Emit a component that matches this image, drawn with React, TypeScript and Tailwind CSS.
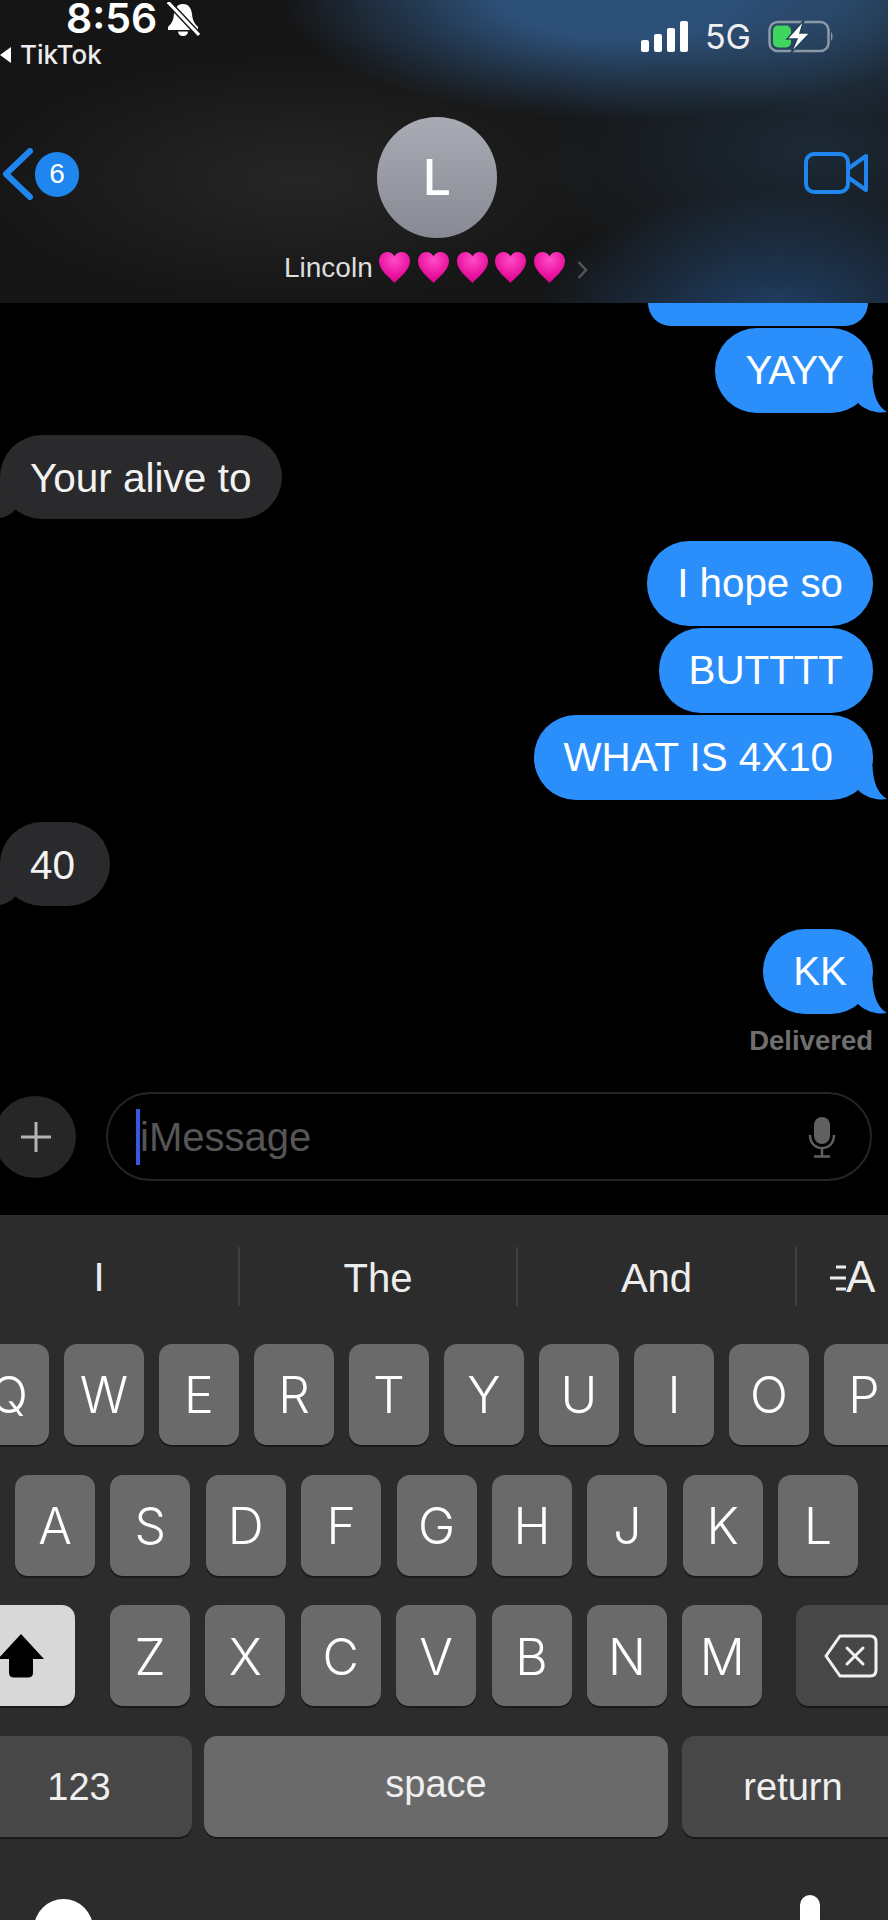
import React from "react";

const LS = "font-['Liberation_Sans',sans-serif]";

function Heart() {
  return (
    <svg width="31" height="31" viewBox="0 0 31 31" className="shrink-0">
      <defs>
        <radialGradient id="hg" cx="0.5" cy="0.25" r="0.8">
          <stop offset="0" stopColor="#ff4cc6" />
          <stop offset="0.6" stopColor="#ea16a2" />
          <stop offset="1" stopColor="#d1008a" />
        </radialGradient>
      </defs>
      <path d="M15.5 31C10 25 0 18 0 9C0 3.5 4 0 8.5 0C11.5 0 14 1.5 15.5 4.5C17 1.5 19.5 0 22.5 0C27 0 31 3.5 31 9C31 18 21 25 15.5 31Z" fill="url(#hg)" />
    </svg>
  );
}

function Tail() {
  return (
    <svg width="32" height="34" viewBox="0 0 32 34" className="absolute right-[-15px] bottom-0">
      <path d="M2 24L8 0H16.5C17 16 22 28 31 33C24 34.5 11 33 2 24Z" fill="#2b8ffb" />
    </svg>
  );
}

function LeftTail() {
  return (
    <svg width="18" height="40" viewBox="0 0 18 40" className="absolute left-0 bottom-0">
      <path d="M0 0H2L16 30C11 35 6 38 0 39Z" fill="#2a2a2c" />
    </svg>
  );
}

function Sent({ text, tail, className }: { text: string; tail?: boolean; className: string }) {
  return (
    <div className={`relative self-end mr-[15px] flex h-[85px] items-center rounded-[42px] bg-[#2b8ffb] pt-[2px] text-[40.3px] text-white ${className}`}>
      {text}
      {tail && <Tail />}
    </div>
  );
}

function Received({ text, className }: { text: string; className: string }) {
  return (
    <div className={`relative self-start flex h-[84px] items-center rounded-[42px] bg-[#2a2a2c] pl-[30px] pt-[2px] text-[40.5px] text-[#f2f2f2] ${className}`}>
      {text}
      <LeftTail />
    </div>
  );
}

function Key({ label, low }: { label: string; low?: boolean }) {
  return (
    <div className={`flex h-[101px] w-[80px] shrink-0 items-center justify-center rounded-[13px] bg-[#6a6a6a] font-['Inter',sans-serif] text-[50px] font-light text-white shadow-[0_2px_0_#191919] ${low ? "pt-[4px]" : "pt-[2px]"}`}>
      {label}
    </div>
  );
}

export default function App() {
  return (
    <div className={`${LS} flex h-[1920px] w-[888px] flex-col overflow-hidden bg-black`}>
      {/* header */}
      <header className="h-[303px] shrink-0 bg-[#151515] bg-[radial-gradient(ellipse_340px_125px_at_620px_-5px,#2d5078_0%,#2d5078_35%,#2d507800_100%),radial-gradient(ellipse_200px_120px_at_830px_0px,#27435f,#27435f00),radial-gradient(ellipse_240px_130px_at_775px_320px,#21426a_0%,#21426500_100%),radial-gradient(ellipse_280px_150px_at_810px_150px,#1c2936,#1c293600),radial-gradient(ellipse_330px_130px_at_300px_180px,#262626,#26262600)]">
        <div className="flex h-[117px] justify-between">
          <div className="flex flex-col font-['Inter',sans-serif] text-white">
            <div className="ml-[66px] flex items-start gap-[10px]">
              <span className="text-[41px] font-semibold leading-[36px]">8:56</span>
              <svg width="33" height="34" viewBox="0 0 33 34" className="mt-[2px]">
                <path d="M16 2C10 2 7.5 7 7 12C6.5 18 5 21 1 25V28H31V25C27 21 25.5 18 25 12C24.5 7 22 2 16 2Z" fill="#fff" />
                <path d="M11 29.5H21C21 32 19 34 16 34C13 34 11 32 11 29.5Z" fill="#fff" />
                <path d="M1 0L32 33" stroke="#151515" strokeWidth="6" />
                <path d="M1 0L32 33" stroke="#fff" strokeWidth="3" />
              </svg>
            </div>
            <div className="mt-[4px] flex items-center gap-[9px]">
              <svg width="11" height="16" viewBox="0 0 11 16"><path d="M11 0V16L0 8Z" fill="#fff" /></svg>
              <span className="text-[26px] font-medium leading-[30px] text-[#ececec]">TikTok</span>
            </div>
          </div>
          <div className="mr-[54px] mt-[21px] flex h-[31px] items-end">
            <div className="flex items-end gap-[5px]">
              <span className="h-[12px] w-[8px] rounded-[2px] bg-white" />
              <span className="h-[18px] w-[8px] rounded-[2px] bg-white" />
              <span className="h-[24px] w-[8px] rounded-[2px] bg-white" />
              <span className="h-[31px] w-[8px] rounded-[2px] bg-white" />
            </div>
            <span className="ml-[17px] mb-[-3px] font-['Inter',sans-serif] text-[34px] leading-[36px] text-[#f0f0f0]">5G</span>
            <svg width="66" height="33" viewBox="0 0 66 33" className="ml-[17px] mb-[-1px]">
              <rect x="1.5" y="2" width="59" height="29" rx="8" fill="none" stroke="#8d9aa6" strokeWidth="2.5" />
              <path d="M63 12C65 13 65 20 63 21Z" fill="#8d9aa6" />
              <rect x="5" y="5.5" width="18" height="22" rx="5" fill="#3ed65c" />
              <path d="M36 0L19 19H29L23 33L42 13H32Z" fill="#fff" stroke="#24405c" strokeWidth="1.5" />
            </svg>
          </div>
        </div>
        <div className="flex items-start">
          <div className="flex w-[283px] items-center pl-[2px] pt-[31px]">
            <svg width="31" height="52" viewBox="0 0 31 52">
              <path d="M28 3L4 26L28 49" fill="none" stroke="#1f86ef" strokeWidth="6" strokeLinecap="round" strokeLinejoin="round" />
            </svg>
            <div className="ml-[2px] flex h-[45px] w-[44px] items-center justify-center rounded-full bg-[#1f86ef] text-[28px] text-white">6</div>
          </div>
          <div className="flex w-[308px] flex-col items-center">
            <div className="flex h-[121px] w-[120px] items-center justify-center rounded-full bg-linear-to-b from-[#a9abb5] to-[#888a93] font-['Inter',sans-serif] text-[50px] font-medium text-white">L</div>
            <div className="mt-[14px] flex h-[31px] w-full items-center text-[28px] text-[#dedede]">
              <span className="w-[96px] shrink-0 pl-[1px]">Lincoln</span>
              <div className="flex gap-[7.8px]">
                <Heart />
                <Heart />
                <Heart />
                <Heart />
                <Heart />
              </div>
              <svg width="11" height="18" viewBox="0 0 11 18" className="ml-[12px] mt-[4px]">
                <path d="M1.5 1L9 9L1.5 17" fill="none" stroke="#555" strokeWidth="2.5" />
              </svg>
            </div>
          </div>
          <div className="flex flex-1 justify-end pr-[20px] pt-[35px]">
            <svg width="64" height="42" viewBox="0 0 64 42">
              <rect x="2" y="2" width="42" height="38" rx="8" fill="none" stroke="#1f86ef" strokeWidth="4" />
              <path d="M45 16L62 4V38L45 26" fill="none" stroke="#1f86ef" strokeWidth="4" strokeLinejoin="round" />
            </svg>
          </div>
        </div>
      </header>

      {/* conversation */}
      <main className="flex flex-col">
        <div className="ml-auto mr-[20px] h-[23px] w-[220px] rounded-b-[30px] bg-[#2b8ffb]" />
        <div className="mt-[2px] flex flex-col">
          <Sent text="YAYY" tail className="pl-[30px] pr-[30px] tracking-[-1px]" />
        </div>
        <div className="mt-[22px] flex flex-col">
          <Received text="Your alive to" className="pr-[31px]" />
        </div>
        <div className="mt-[22px] flex flex-col gap-[2px]">
          <Sent text="I hope so" className="px-[30px]" />
          <Sent text="BUTTTT" className="px-[30px]" />
          <Sent text="WHAT IS 4X10" tail className="pl-[30px] pr-[40px]" />
        </div>
        <div className="mt-[22px] flex flex-col">
          <Received text="40" className="pr-[35px]" />
        </div>
        <div className="mt-[23px] flex flex-col">
          <Sent text="KK" tail className="pl-[30px] pr-[26px]" />
        </div>
        <div className="mr-[15px] mt-[12px] h-[30px] text-right text-[27.5px] font-bold leading-[30px] text-[#6f6f6f]">Delivered</div>
      </main>

      {/* input */}
      <div className="mt-[36px] flex items-center">
        <div className="ml-[-6px] flex h-[82px] w-[82px] shrink-0 items-center justify-center rounded-full bg-[#262626]">
          <svg width="32" height="32" viewBox="0 0 32 32" className="ml-[2px]">
            <path d="M16 1V31M1 16H31" stroke="#b4b4b4" strokeWidth="3" />
          </svg>
        </div>
        <div className="ml-[30px] flex h-[89px] w-[766px] items-center rounded-[45px] border-2 border-[#242424] pl-[28px] pr-[34px]">
          <span className="h-[56px] w-[4px] bg-[#3658e0]" />
          <span className="text-[40px] text-[#565656]">iMessage</span>
          <svg width="28" height="42" viewBox="0 0 28 42" className="ml-auto">
            <rect x="6" y="1" width="16" height="27" rx="8" fill="#606060" />
            <path d="M2 19C2 27 7 32 14 32C21 32 26 27 26 19M14 32V40M6 40.5H22" fill="none" stroke="#606060" strokeWidth="2.5" />
          </svg>
        </div>
      </div>

      {/* keyboard */}
      <section className="mt-[34px] flex flex-1 flex-col bg-[#2c2c2c]">
        <div className="mt-[32px] flex h-[59px] items-center text-[40px] text-[#ededed]">
          <div className="w-[238px] pr-[40px] text-center">I</div>
          <div className="h-full w-[278px] border-l-2 border-[#3f3f3f] text-center leading-[62px]">The</div>
          <div className="h-full w-[279px] border-l-2 border-[#3f3f3f] text-center leading-[62px]">And</div>
          <div className="flex h-full flex-1 items-center border-l-2 border-[#3f3f3f] pl-[33px]">
            <svg width="16" height="28" viewBox="0 0 16 28" className="mt-[2px]">
              <path d="M6 3H16M0 14H16M6 25H16" stroke="#ededed" strokeWidth="3" />
            </svg>
            <span className="text-[44px]">A</span>
          </div>
        </div>

        <div className="ml-[-31px] mt-[38px] flex gap-[15px]">
          {["Q", "W", "E", "R", "T", "Y", "U", "I", "O", "P"].map((k) => (
            <Key key={k} label={k} />
          ))}
        </div>

        <div className="ml-[15px] mt-[30px] flex gap-[15.4px]">
          {["A", "S", "D", "F", "G", "H", "J", "K", "L"].map((k) => (
            <Key key={k} label={k} />
          ))}
        </div>

        <div className="mt-[29px] flex">
          <div className="ml-[-25px] flex h-[101px] w-[100px] shrink-0 items-center justify-center rounded-[13px] bg-[#d8d8d8] pr-[8px] shadow-[0_2px_0_#191919]">
            <svg width="48" height="45" viewBox="0 0 48 45">
              <path d="M24 1L47 26H36V40C36 43 34 44.5 31 44.5H17C14 44.5 12 43 12 40V26H1Z" fill="#000" />
            </svg>
          </div>
          <div className="ml-[35px] flex gap-[15.4px]">
            {["Z", "X", "C", "V", "B", "N", "M"].map((k) => (
              <Key key={k} label={k} low />
            ))}
          </div>
          <div className="ml-[34px] flex h-[101px] w-[120px] shrink-0 items-center rounded-[13px] bg-[#474747] pl-[28px] shadow-[0_2px_0_#191919]">
            <svg width="54" height="44" viewBox="0 0 54 44">
              <path d="M16 2H46C50 2 52 4 52 8V36C52 40 50 42 46 42H16L2 22Z" fill="none" stroke="#f2f2f2" strokeWidth="3" strokeLinejoin="round" />
              <path d="M23 14L39 30M39 14L23 30" stroke="#f2f2f2" strokeWidth="3" strokeLinecap="round" />
            </svg>
          </div>
        </div>

        <div className="mt-[30px] flex text-[38px] text-[#efefef]">
          <div className="ml-[-34px] flex h-[101px] w-[226px] shrink-0 items-center justify-center rounded-[13px] bg-[#474747] pt-[2px] shadow-[0_2px_0_#191919]">123</div>
          <div className="ml-[12px] flex h-[101px] w-[464px] shrink-0 items-center justify-center rounded-[13px] bg-[#6a6a6a] pb-[4px] shadow-[0_2px_0_#191919]">space</div>
          <div className="ml-[14px] flex h-[101px] w-[222px] shrink-0 items-center justify-center rounded-[13px] bg-[#474747] pt-[2px] shadow-[0_2px_0_#191919]">return</div>
        </div>

        <div className="flex items-start justify-between">
          <div className="ml-[34px] mt-[62px] h-[59px] w-[59px] rounded-full bg-white" />
          <div className="mr-[68px] mt-[58px] h-[40px] w-[20px] rounded-[10px] bg-white" />
        </div>
      </section>
    </div>
  );
}
